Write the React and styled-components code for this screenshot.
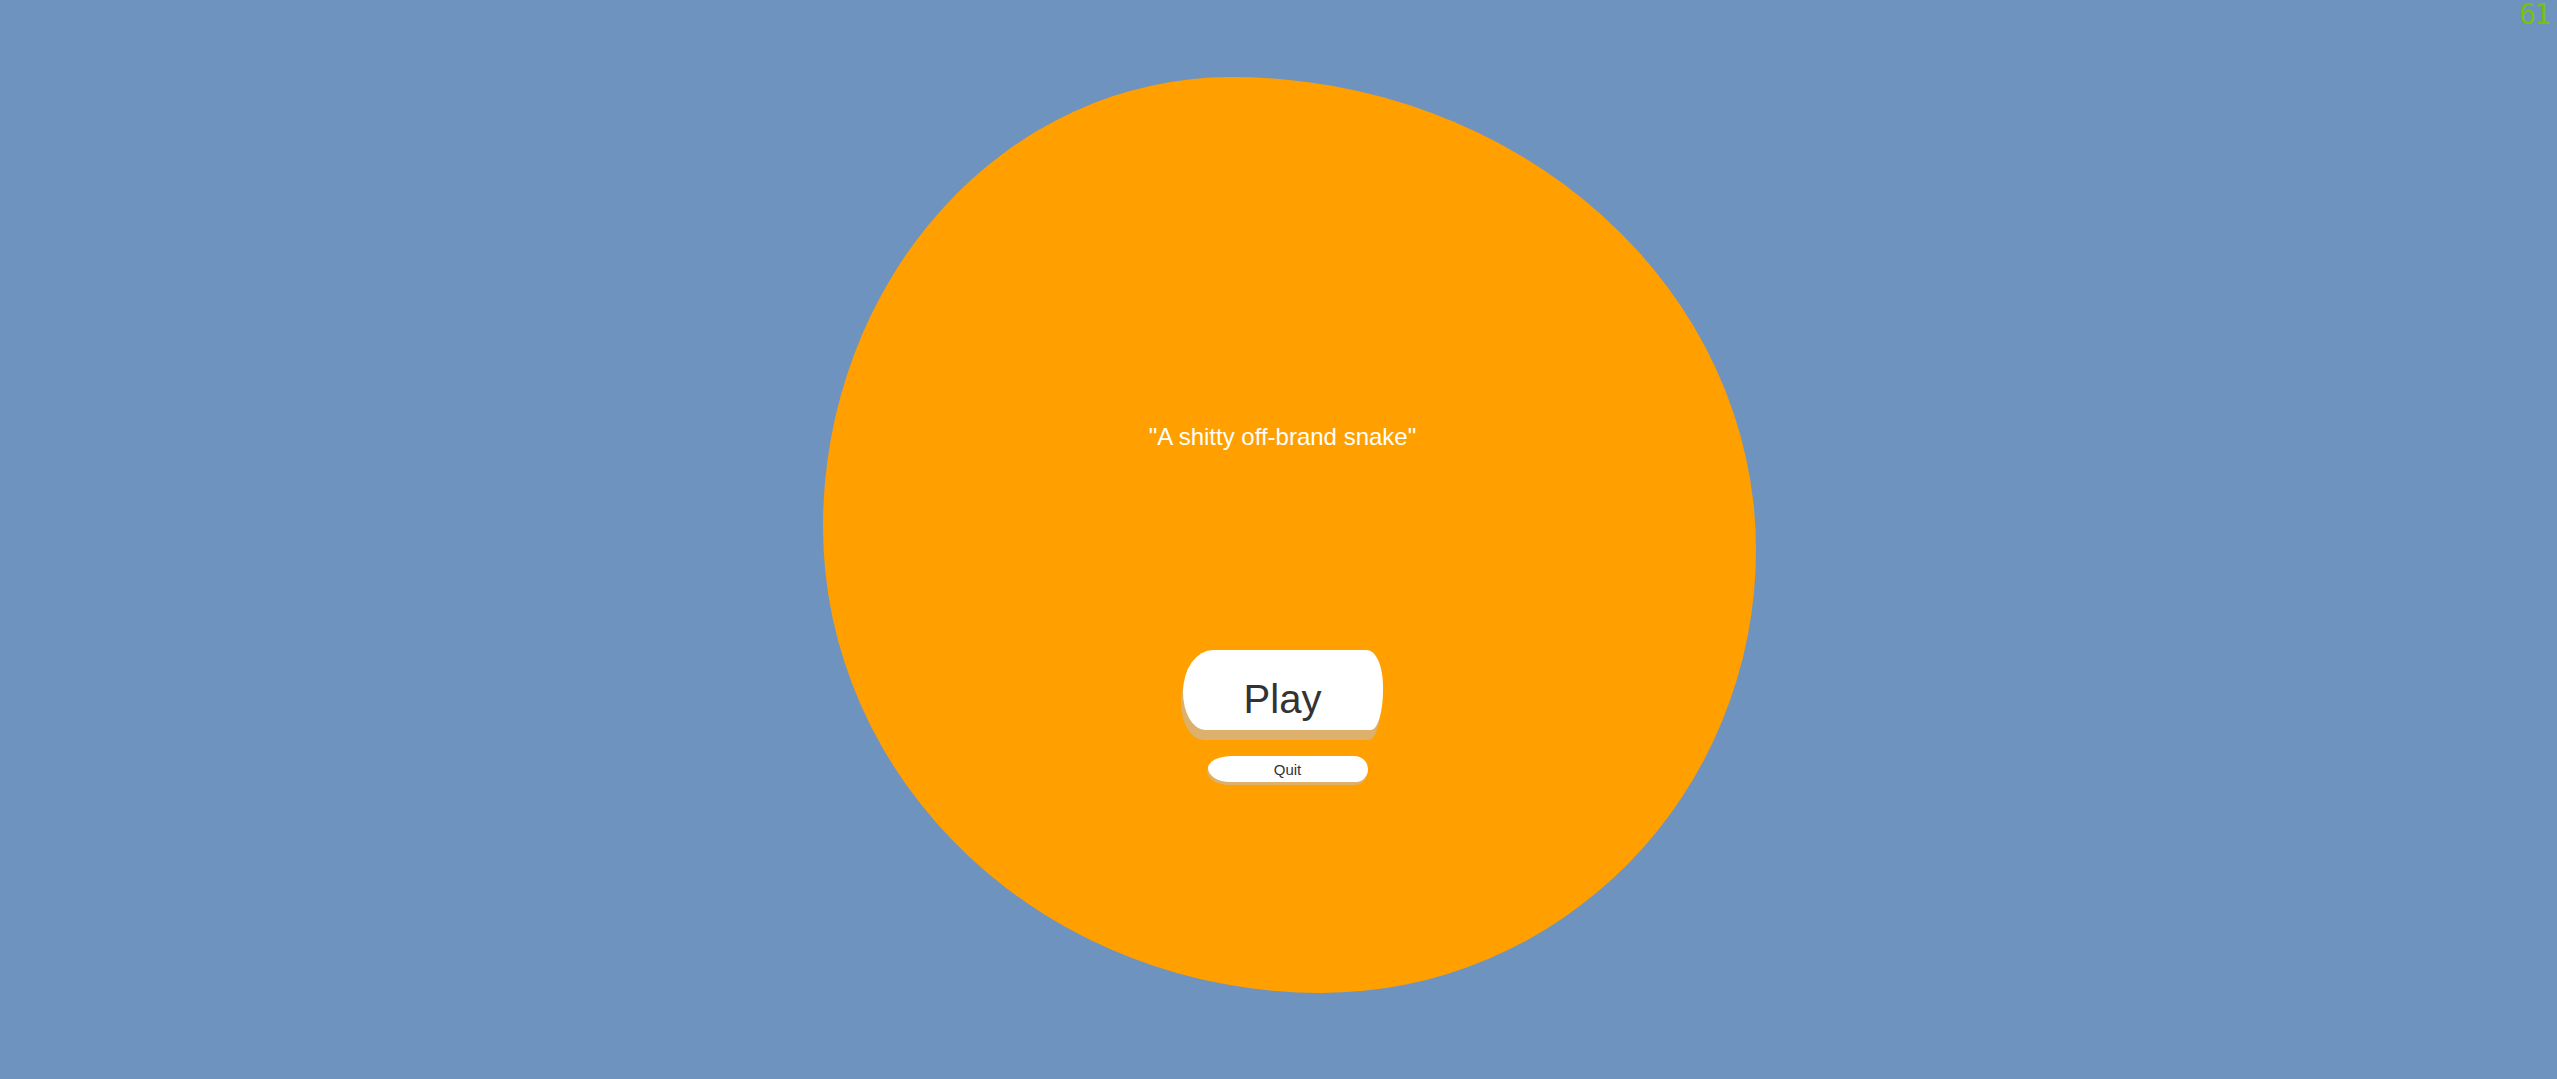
import React from 'react';
import styled, { createGlobalStyle } from 'styled-components';

const GlobalStyle = createGlobalStyle`
  html, body {
    margin: 0;
    padding: 0;
    background: #6f93bf;
    overflow: hidden;
  }
  body {
    font-family: "Liberation Sans", Arial, sans-serif;
  }
`;

const Stage = styled.main`
  width: 100vw;
  height: 100vh;
  box-sizing: border-box;
  display: grid;
  place-items: center;
  padding: 0 0 9px 22px;
  position: relative;
`;

const Blob = styled.section`
  width: 933px;
  height: 916px;
  box-sizing: border-box;
  background: #ff9f00;
  border-radius: 43.7% 56.3% 46.6% 53.4% / 49.1% 51.6% 48.4% 50.9%;
  display: flex;
  flex-direction: column;
  align-items: center;
  padding: 346px 14px 0 0;
`;

const Tagline = styled.p`
  margin: 0;
  color: #fff;
  font-size: 24px;
  line-height: 28px;
`;

const MenuButton = styled.button`
  border: none;
  background: #fff;
  color: #333;
  font-family: "Liberation Sans", Arial, sans-serif;
  display: flex;
  align-items: center;
  justify-content: center;
  cursor: pointer;
  box-sizing: border-box;
  padding: 0;
`;

const PlayButton = styled(MenuButton)`
  margin-top: 199px;
  width: 200px;
  height: 80px;
  padding-top: 18px;
  font-size: 40px;
  line-height: 40px;
  border-radius: 30px 16px 12px 22px / 42px 36px 40px 38px;
  box-shadow: -2px 10px 0 #ddb06c;
`;

const QuitButton = styled(MenuButton)`
  margin: 26px 0 0 10px;
  width: 160px;
  height: 26px;
  font-size: 15px;
  line-height: 15px;
  border-radius: 24px 14px 12px 22px / 12px 13px 13px 14px;
  box-shadow: -1px 3px 0 #ddb06c;
`;

const FpsCounter = styled.div`
  position: absolute;
  top: 0;
  right: 8px;
  color: #78c20c;
  font-family: "DejaVu Sans Mono", monospace;
  font-size: 28px;
  line-height: 30px;
  letter-spacing: -2px;
`;

export default function App() {
  return (
    <>
      <GlobalStyle />
      <Stage>
        <Blob>
          <Tagline>"A shitty off-brand snake"</Tagline>
          <PlayButton>Play</PlayButton>
          <QuitButton>Quit</QuitButton>
        </Blob>
        <FpsCounter>61</FpsCounter>
      </Stage>
    </>
  );
}
